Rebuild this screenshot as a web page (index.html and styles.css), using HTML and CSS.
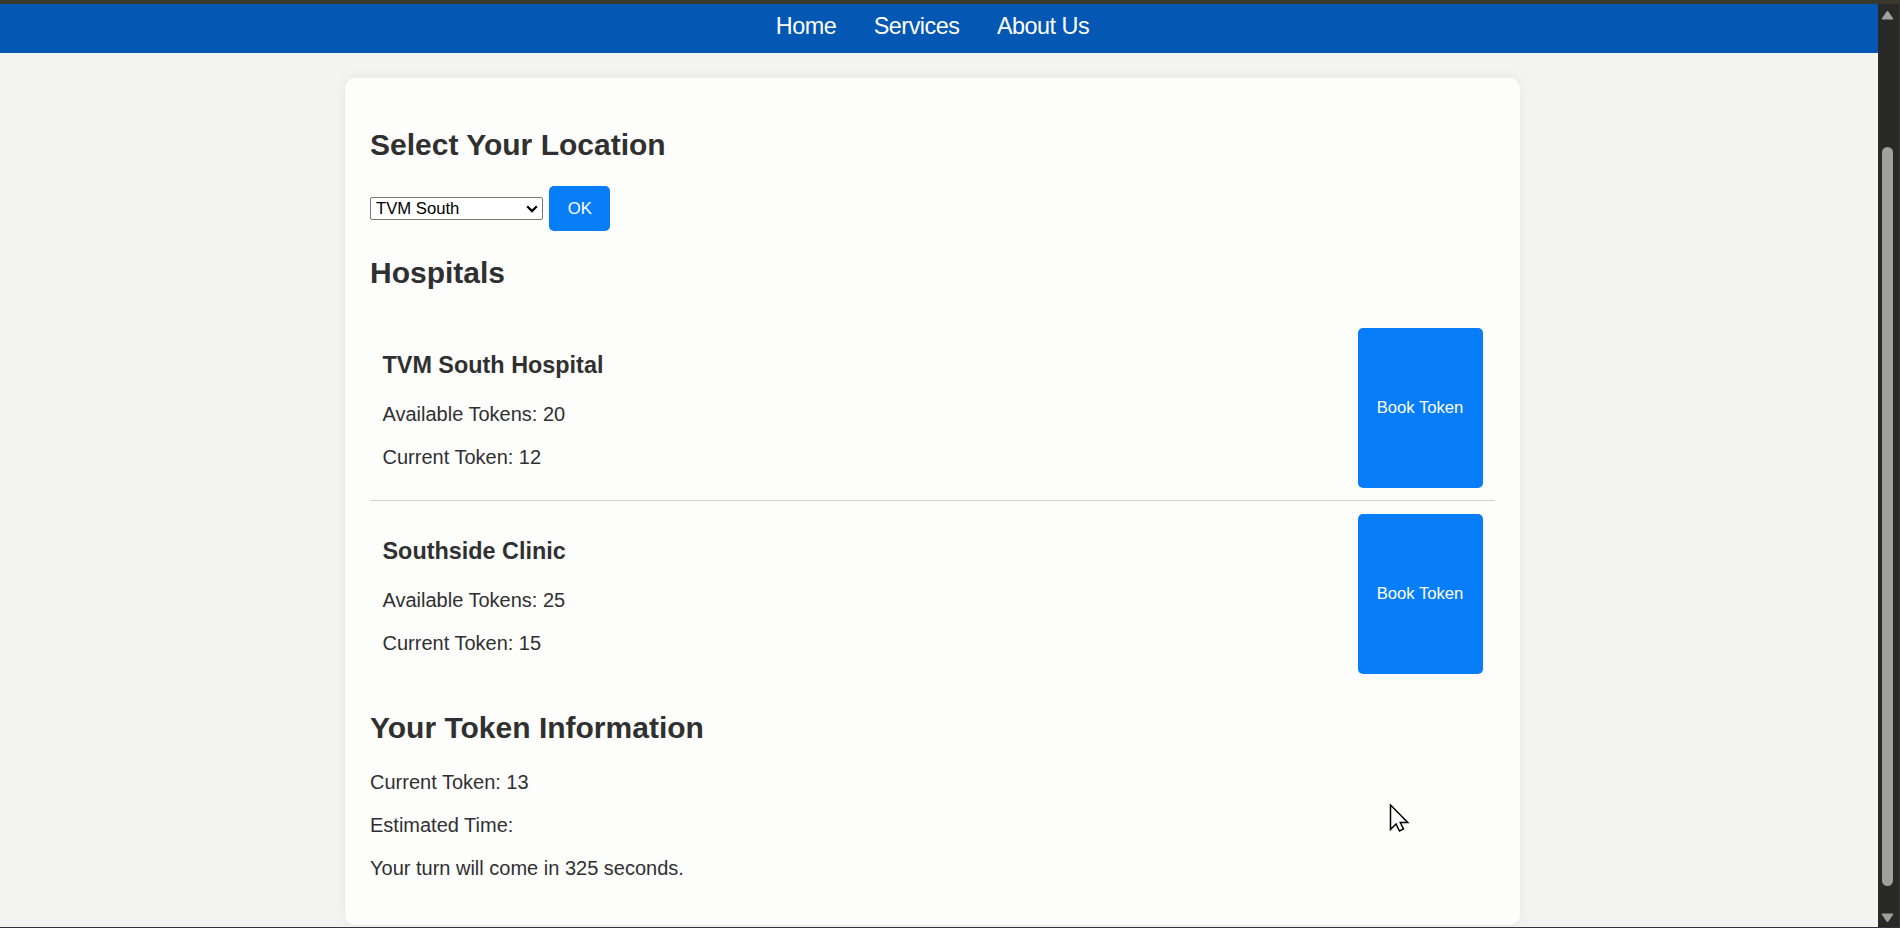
FILE: index.html
```html
<!DOCTYPE html>
<html lang="en">
<head>
<meta charset="utf-8">
<title>Hospital Token Booking</title>
<link rel="stylesheet" href="styles.css">
</head>
<body>
<div class="window">
  <div class="page">
    <nav class="nav">
      <a class="nav-link">Home</a>
      <a class="nav-link">Services</a>
      <a class="nav-link">About Us</a>
    </nav>
    <main class="container">
      <h2>Select Your Location</h2>
      <div class="picker">
        <div class="select"><span>TVM South</span>
          <svg class="chevron" width="12" height="8" viewBox="0 0 12 8"><path d="M1.2 1.3 6 6.1l4.8-4.8" fill="none" stroke="#000" stroke-width="2.2"/></svg>
        </div>
        <button class="btn">OK</button>
      </div>
      <h2>Hospitals</h2>
      <section class="hospital">
        <div>
          <h3>TVM South Hospital</h3>
          <p>Available Tokens: 20</p>
          <p>Current Token: 12</p>
        </div>
        <button class="btn">Book Token</button>
      </section>
      <section class="hospital">
        <div>
          <h3>Southside Clinic</h3>
          <p>Available Tokens: 25</p>
          <p>Current Token: 15</p>
        </div>
        <button class="btn">Book Token</button>
      </section>
      <h2 class="info-title">Your Token Information</h2>
      <p>Current Token: 13</p>
      <p>Estimated Time:</p>
      <p>Your turn will come in 325 seconds.</p>
    </main>
  </div>
  <aside class="scrollbar">
    <svg width="13" height="10" viewBox="0 0 13 10"><path d="M6.5 1 12 9H1z" fill="#a0a09e" stroke="#a0a09e" stroke-linejoin="round"/></svg>
    <div class="thumb"></div>
    <svg width="13" height="10" viewBox="0 0 13 10"><path d="M1 1h11L6.500 9z" fill="#a0a09e" stroke="#a0a09e" stroke-linejoin="round"/></svg>
  </aside>
</div>
<svg class="cursor" width="21" height="30" viewBox="0 0 21 30"><path d="M1.500 2v24.500l5.500-5.500 3.500 7 4-2-3.200-6.500h7.500z" fill="#fff" stroke="#000" stroke-width="1.500"/></svg>
</body>
</html>
```
FILE: styles.css
```css
* { box-sizing: border-box; }
body {
  margin: 0;
  height: 928px;
  overflow: hidden;
  font: 20px/23px "Liberation Sans", Arial, sans-serif;
  color: #303030;
}
.window {
  display: flex;
  height: 928px;
  border-top: 4px solid #39382c;
  border-bottom: 1px solid #33333b;
  background: #f3f3f1;
}
.page { flex: 1; overflow: hidden; }
.nav {
  display: flex;
  justify-content: center;
  gap: 37.5px;
  height: 49px;
  padding: 9px 13px 0 0;
  background: #0457b2;
}
.nav-link { color: #fff; font-size: 23.4px; line-height: 27px; letter-spacing: -0.5px; }
.container {
  width: 1175px;
  height: 847px;
  margin: 25px 0 0 345px;
  padding: 25px;
  display: flow-root;
  background: #fdfdfc;
  border-radius: 10px;
  box-shadow: 0 0 12px rgba(0, 0, 0, .06);
}
h2 { margin: 25px 0; font-size: 30px; line-height: 34px; }
.container > h2:first-child { margin-bottom: 24px; }
.container > .info-title { margin-bottom: 26px; }
h3 { margin: 24px 0; font-size: 23.4px; line-height: 27px; }
p { margin: 20px 0; }
.picker { display: flex; align-items: center; gap: 6px; height: 45px; }
.select {
  display: flex;
  align-items: center;
  justify-content: space-between;
  width: 173px;
  height: 23px;
  padding: 0 4px 0 5px;
  border: 1px solid #767676;
  border-radius: 2px;
  background: #fff;
  color: #000;
  font-size: 16.67px;
}
.btn {
  padding: 12px 18.75px;
  border: 0;
  border-radius: 5px;
  background: #087df8;
  color: #fff;
  font: 16.67px/20px "Liberation Sans", Arial, sans-serif;
}
.picker .btn { width: 61px; height: 45px; }
.hospital {
  display: flex;
  justify-content: space-between;
  height: 186px;
  padding: 13px 12.5px 12px;
  border-bottom: 1px solid #d2d2ce;
}
.hospital .btn { width: 125px; }
.hospital + .hospital { height: 185px; border-bottom: 0; }
.scrollbar {
  display: flex;
  flex-direction: column;
  align-items: center;
  width: 22px;
  padding: 6px 3px 4px 0;
  background: #292928;
  border-right: 1px solid #39382c;
}
.thumb { width: 11px; height: 739px; margin: 127px 0 auto; border-radius: 6px; background: #a0a09e; }
.cursor { position: absolute; left: 1389px; top: 803px; }
```
